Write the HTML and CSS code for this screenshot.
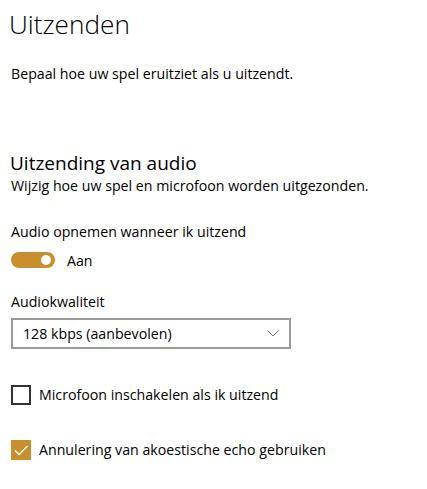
FILE: index.html
```html
<!DOCTYPE html>
<html lang="nl">
  <head>
    <meta charset="utf-8">
    <title>Uitzenden</title>
    <link rel="stylesheet" href="styles.css">
  </head>
  <body>
    <div class="page">
      <h1>Uitzenden</h1>
      <p class="intro">Bepaal hoe uw spel eruitziet als u uitzendt.</p>

      <h2>Uitzending van audio</h2>
      <p class="sub">Wijzig hoe uw spel en microfoon worden uitgezonden.</p>

      <div class="field">
        <p class="label">Audio opnemen wanneer ik uitzend</p>
        <div class="toggleRow">
          <span class="toggle"><span class="knob"></span></span>
          <span>Aan</span>
        </div>
      </div>

      <div class="field quality">
        <p class="label">Audiokwaliteit</p>
        <div class="select">
          <span>128 kbps (aanbevolen)</span>
          <svg class="chevron" width="12" height="7" viewBox="0 0 12 7">
            <path d="M0.5 0.5 L6 6 L11.5 0.5" fill="none" stroke="#777" stroke-width="1"/>
          </svg>
        </div>
      </div>

      <div class="check">
        <span class="box"></span>
        <span>Microfoon inschakelen als ik uitzend</span>
      </div>

      <div class="check">
        <span class="box on">
          <svg width="20" height="20" viewBox="0 0 20 20">
            <path d="M4 10.5 L8 14.5 L16.5 6" fill="none" stroke="#fff" stroke-width="1.3"/>
          </svg>
        </span>
        <span>Annulering van akoestische echo gebruiken</span>
      </div>
    </div>
  </body>
</html>
```

FILE: styles.css
```css
body {
  margin: 0;
  background-color: #ffffff;
  color: #000000;
  font-family: "Open Sans", "Noto Sans", sans-serif;
  font-size: 14.2px;
  line-height: 20px;
}
p {
  margin: 0;
}
.page {
  padding: 4px 0 0 11px;
}
h1 {
  margin: 0;
  margin-left: -2px;
  font-size: 26.2px;
  font-weight: 300;
  line-height: 40px;
}
.intro {
  margin-top: 20px;
}
h2 {
  margin: 66px 0 0 -1px;
  font-size: 19px;
  font-weight: 400;
  line-height: 26px;
}
.field {
  margin-top: 26px;
}
.toggleRow {
  display: flex;
  align-items: center;
  gap: 12px;
  margin-top: 9px;
}
.toggle {
  display: flex;
  align-items: center;
  justify-content: flex-end;
  box-sizing: border-box;
  width: 44px;
  height: 16px;
  margin-bottom: 2px;
  padding-right: 4px;
  border-radius: 8px;
  background-color: #c98f2f;
}
.knob {
  width: 10px;
  height: 10px;
  border-radius: 50%;
  background-color: #ffffff;
}
.field.quality {
  margin-top: 21px;
}
.select {
  display: flex;
  align-items: center;
  justify-content: space-between;
  box-sizing: border-box;
  width: 280px;
  height: 31px;
  margin-top: 6px;
  padding: 0 10px 0 10px;
  border: 2px solid #9a9a9a;
}
.check {
  display: flex;
  align-items: center;
  gap: 8px;
  margin-top: 36px;
}
.check + .check {
  margin-top: 35px;
}
.box {
  display: block;
  box-sizing: border-box;
  width: 20px;
  height: 20px;
  border: 2px solid #333333;
}
.box.on {
  border: none;
  background-color: #c98f2f;
}
.box svg {
  display: block;
}
```
